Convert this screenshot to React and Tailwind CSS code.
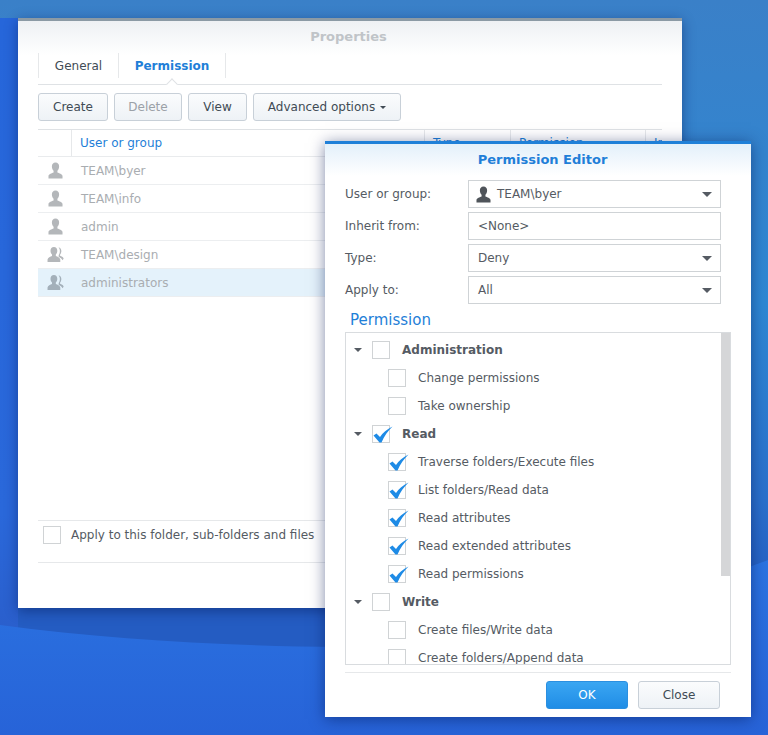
import React from 'react';

const UserIcon = ({ className }) => (
  <svg viewBox="0 0 16 16" className={className} fill="currentColor">
    <path d="M8 0.5c-2.2 0-3.4 1.6-3.4 3.7 0 1.7 0.7 3.2 1.6 4.1v1.5c-1.6 0.7-4.6 1.3-4.8 3.4v2.3h13.200v-2.300c-0.200-2.100-3.200-2.700-4.800-3.400v-1.500c0.900-0.900 1.600-2.400 1.600-4.100 0-2.100-1.200-3.700-3.400-3.700z" />
  </svg>
);

const GroupIcon = ({ className }) => (
  <svg viewBox="0 0 16 16" className={className} fill="currentColor">
    <path d="M6.500 1c-2 0-3.200 1.500-3.200 3.500 0 1.500 0.600 2.800 1.400 3.600v1.400c-1.500 0.700-3.900 1.300-4.200 3.300v2.200h12v-2.200c-0.300-2-2.700-2.600-4.200-3.300v-1.400c0.800-0.800 1.400-2.100 1.400-3.600 0-2-1.200-3.500-3.200-3.500z" />
    <path d="M10.800 1.200c1.700 0.300 2.700 1.700 2.700 3.500 0 1.400-0.500 2.600-1.200 3.400v1c1.300 0.500 3 1.200 3.400 2.800l-1.200 1.500c-0.600-1.500-2-2.300-3.500-3v-2c0.700-0.900 1.100-2.300 1.100-3.800 0-1.300-0.400-2.400-1.300-3.400z" />
  </svg>
);

const Check = () => (
  <svg viewBox="0 0 22 22" className="absolute -top-[1px] -left-[1px] w-[22px] h-[22px]">
    <path d="M1.500 10.500L4.500 8.500 8 12C10.500 8 15 4 20.500 1.500 16 6 12 11 9.500 17.500H7.500Z" fill="#1e8be6" />
  </svg>
);

const Box = ({ checked }) => (
  <span className="relative block w-[18px] h-[18px] shrink-0 border border-[#d0d3d5] bg-white">
    {checked && <Check />}
  </span>
);

const Caret = () => (
  <span className="w-0 h-0 border-x-[5px] border-x-transparent border-t-[5px] border-t-[#555b63]" />
);

const users = [
  { name: 'TEAM\\byer', group: false },
  { name: 'TEAM\\info', group: false },
  { name: 'admin', group: false },
  { name: 'TEAM\\design', group: true },
  { name: 'administrators', group: true, selected: true },
];

const tree = [
  { label: 'Administration', top: true },
  { label: 'Change permissions' },
  { label: 'Take ownership' },
  { label: 'Read', top: true, checked: true },
  { label: 'Traverse folders/Execute files', checked: true },
  { label: 'List folders/Read data', checked: true },
  { label: 'Read attributes', checked: true },
  { label: 'Read extended attributes', checked: true },
  { label: 'Read permissions', checked: true },
  { label: 'Write', top: true },
  { label: 'Create files/Write data' },
  { label: 'Create folders/Append data' },
];

const fields = [
  { label: 'User or group:', value: 'TEAM\\byer', icon: true, caret: true },
  { label: 'Inherit from:', value: '<None>' },
  { label: 'Type:', value: 'Deny', caret: true },
  { label: 'Apply to:', value: 'All', caret: true },
];

const ToolButton = ({ children, disabled, className }) => (
  <button className={`h-[28px] rounded-[3px] border border-[#c8d0d8] bg-gradient-to-b from-[#fbfcfd] to-[#eef2f6] text-[12px] ${disabled ? 'text-[#9ba1a7]' : 'text-[#414b55]'} ${className}`}>
    {children}
  </button>
);

export default function App() {
  return (
    <div className="relative w-[768px] h-[735px] overflow-hidden bg-[#2a6bd4] font-['DejaVu_Sans',sans-serif]">
      {/* wallpaper */}
      <svg viewBox="0 0 768 735" className="absolute inset-0 w-full h-full">
        <defs>
          <linearGradient id="sky" x1="0" y1="0" x2="0" y2="1">
            <stop offset="0" stopColor="#3a80c8" />
            <stop offset="0.46" stopColor="#2e88d4" />
            <stop offset="0.76" stopColor="#2a70cc" />
            <stop offset="0.92" stopColor="#245cc2" />
            <stop offset="1" stopColor="#245cc2" />
          </linearGradient>
          <linearGradient id="strip" x1="0" y1="0" x2="0" y2="1">
            <stop offset="0" stopColor="#2666da" />
            <stop offset="0.8" stopColor="#2a68da" />
            <stop offset="1" stopColor="#2a5ecb" />
          </linearGradient>
          <linearGradient id="wave" x1="0" y1="0" x2="0" y2="1">
            <stop offset="0" stopColor="#2b74e2" />
            <stop offset="1" stopColor="#2763d8" />
          </linearGradient>
        </defs>
        <rect x="0" y="0" width="768" height="660" fill="url(#sky)" />
        <rect x="0" y="18" width="18" height="620" fill="url(#strip)" />
        <path d="M0 625C110 640 230 646 340 647 480 648 640 610 768 560V735H0Z" fill="url(#wave)" />
      </svg>

      {/* Properties window */}
      <div className="absolute left-[18px] top-[18px] w-[664px] h-[590px] flex flex-col border-t-[3px] border-[#8b9aa5] bg-white shadow-[0_3px_12px_rgba(0,20,80,0.45)]">
        <div className="h-[34px] shrink-0 pt-[6px] pr-[3px] bg-gradient-to-b from-[#eef1f4] to-white text-center text-[13px] font-bold text-[#c0c4c8]">
          Properties
        </div>
        <div className="mx-5 -mt-[2px] flex h-[32px] items-start border-b border-[#dfe2e5]">
          <div className="flex h-[25px] w-[81px] items-center justify-center border-x border-[#e6e8ea] text-[12px] text-[#414b55]">General</div>
          <div className="relative flex h-[25px] w-[107px] items-center justify-center border-r border-[#e6e8ea] text-[12px] font-bold text-[#1f7fd8]">
            Permission
            <span className="absolute -bottom-[10px] left-1/2 h-[8px] w-[8px] -translate-x-1/2 rotate-45 border-l border-t border-[#dfe2e5] bg-white" />
          </div>
        </div>
        <div className="mx-5 mt-[8px] flex gap-[6px]">
          <ToolButton className="w-[70px]">Create</ToolButton>
          <ToolButton disabled className="w-[68px]">Delete</ToolButton>
          <ToolButton className="w-[59px]">View</ToolButton>
          <ToolButton className="w-[148px]">
            Advanced options
            <span className="ml-[5px] inline-block align-middle w-0 h-0 border-x-[3px] border-x-transparent border-t-[3px] border-t-[#414b55]" />
          </ToolButton>
        </div>
        <div className="mx-5 mt-[8px] border-t border-[#dfe2e5]">
          <div className="flex h-[27px] border-b border-[#e9ebed] text-[12px] text-[#1f7fd8]">
            <div className="w-[34px] border-r border-[#e6e8ea]" />
            <div className="w-[353px] flex items-center border-r border-[#e6e8ea] pl-[8px]">User or group</div>
            <div className="w-[86px] flex items-center border-r border-[#e6e8ea] pl-[8px]">Type</div>
            <div className="w-[135px] flex items-center border-r border-[#e6e8ea] pl-[8px]">Permission</div>
            <div className="flex-1 flex items-center overflow-hidden pl-[8px] whitespace-nowrap">Inherited</div>
          </div>
          {users.map((u) => (
            <div key={u.name} className={`flex h-[28px] items-center border-b border-[#eceef0] text-[12px] text-[#a9adb1] ${u.selected ? 'bg-[#e4f2fb]' : ''}`}>
              {u.group
                ? <GroupIcon className={`ml-[9px] w-[17px] h-[17px] ${u.selected ? 'text-[#a3b0ba]' : 'text-[#b4b7ba]'}`} />
                : <UserIcon className="ml-[9px] w-[17px] h-[17px] text-[#b4b7ba]" />}
              <span className="ml-[17px]">{u.name}</span>
            </div>
          ))}
        </div>
        <div className="mx-5 mt-[223px] flex h-[43px] items-start gap-[10px] border-y border-[#e6e8ea] pl-[5px] pt-[5px] text-[12px] text-[#555b63]">
          <Box />
          <span className="leading-[18px]">Apply to this folder, sub-folders and files</span>
        </div>
      </div>

      {/* Permission Editor dialog */}
      <div className="absolute left-[325px] top-[141px] w-[426px] h-[576px] flex flex-col border-t-[3px] border-[#1f80d8] bg-white shadow-[0_2px_14px_rgba(0,20,80,0.5)]">
        <div className="h-[32px] shrink-0 pt-[6px] pl-[9px] bg-gradient-to-b from-[#e3f0fa] to-white text-center text-[13px] font-bold text-[#1f7fd8]">
          Permission Editor
        </div>
        <div className="flex flex-col gap-[4px] pl-[20px] pr-[30px] pt-[4px]">
          {fields.map((f) => (
            <div key={f.label} className="flex h-[28px] items-center text-[12px] text-[#555b63]">
              <span className="w-[123px]">{f.label}</span>
              <div className="flex h-[28px] flex-1 items-center border border-[#cfd3d6] pl-[9px] pr-[8px]">
                {f.icon && <UserIcon className="-ml-[3px] mr-[5px] w-[17px] h-[17px] text-[#4f545a]" />}
                <span className="flex-1">{f.value}</span>
                {f.caret && <Caret />}
              </div>
            </div>
          ))}
        </div>
        <div className="ml-[25px] mt-[6px] text-[15px] leading-[20px] text-[#1f7fd8]">Permission</div>
        <div className="relative mx-[20px] mt-[2px] h-[333px] overflow-hidden border border-[#d9dcdf] pt-[3px]">
          {tree.map((t) => (
            <div key={t.label} className="flex h-[28px] items-center text-[12px] text-[#555b63]">
              {t.top ? (
                <>
                  <span className="ml-[8px] w-0 h-0 border-x-[4px] border-x-transparent border-t-[4px] border-t-[#555b63]" />
                  <span className="ml-[10px]"><Box checked={t.checked} /></span>
                  <span className="ml-[12px] font-bold">{t.label}</span>
                </>
              ) : (
                <>
                  <span className="ml-[42px]"><Box checked={t.checked} /></span>
                  <span className="ml-[12px]">{t.label}</span>
                </>
              )}
            </div>
          ))}
          <div className="absolute right-0 top-0 h-[243px] w-[9px] bg-[#d5d6d8]" />
        </div>
        <div className="mx-[20px] mt-[7px] flex justify-end gap-[10px] border-t border-[#e6e8ea] pr-[11px] pt-[8px]">
          <button className="h-[28px] w-[82px] rounded-[3px] border border-[#2b8fe0] bg-gradient-to-b from-[#3aa6f2] to-[#1f8de6] text-[12px] text-white">OK</button>
          <button className="h-[28px] w-[82px] rounded-[3px] border border-[#c8d0d8] bg-gradient-to-b from-[#fbfcfd] to-[#eef2f6] text-[12px] text-[#414b55]">Close</button>
        </div>
      </div>
    </div>
  );
}
